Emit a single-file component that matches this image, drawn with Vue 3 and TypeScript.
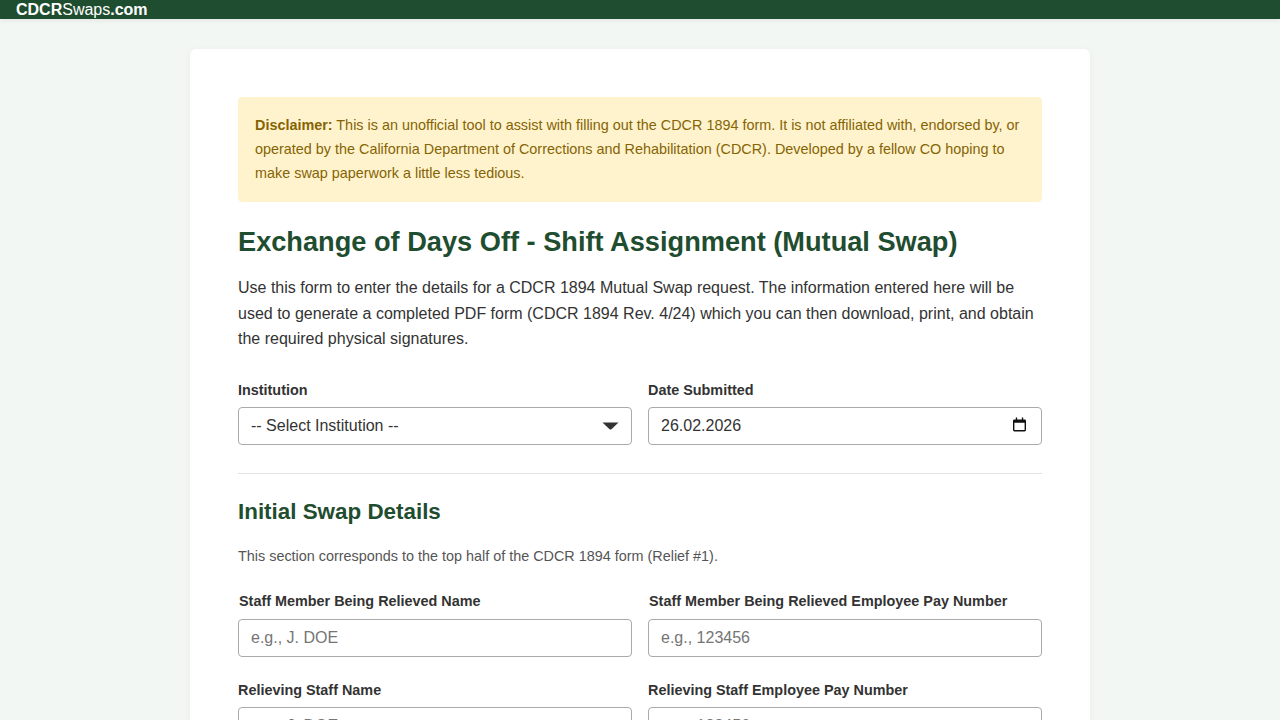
<script setup lang="ts">
import { ref } from 'vue'

interface Field {
  label: string
  placeholder: string
  shifted?: boolean
}

const dateSubmitted = ref('26.02.2026')

const relievedFields: Field[] = [
  { label: 'Staff Member Being Relieved Name', placeholder: 'e.g., J. DOE', shifted: true },
  { label: 'Staff Member Being Relieved Employee Pay Number', placeholder: 'e.g., 123456', shifted: true },
  { label: 'Relieving Staff Name', placeholder: 'e.g., J. DOE' },
  { label: 'Relieving Staff Employee Pay Number', placeholder: 'e.g., 123456' },
]
</script>

<template>
  <div class="page">
    <header class="topbar">
      <a class="brand" href="#"><strong>CDCR</strong>Swaps<strong>.com</strong></a>
    </header>

    <main class="card">
      <div class="notice">
        <strong>Disclaimer:</strong> This is an unofficial tool to assist with filling out the CDCR 1894 form. It is not affiliated with, endorsed by, or operated by the California Department of Corrections and Rehabilitation (CDCR). Developed by a fellow CO hoping to make swap paperwork a little less tedious.
      </div>

      <h1>Exchange of Days Off - Shift Assignment (Mutual Swap)</h1>
      <p class="intro">
        Use this form to enter the details for a CDCR 1894 Mutual Swap request. The information entered here will be used to generate a completed PDF form (CDCR 1894 Rev. 4/24) which you can then download, print, and obtain the required physical signatures.
      </p>

      <div class="grid">
        <div class="field">
          <label for="institution">Institution</label>
          <div class="control">
            <select id="institution">
              <option>-- Select Institution --</option>
            </select>
            <svg class="overlay-icon arrow" width="17" height="8" viewBox="0 0 18 8" preserveAspectRatio="none" aria-hidden="true">
              <path d="M0.5 0.5H17.5L10 7.2Q9 8 8 7.2Z" fill="#333" />
            </svg>
          </div>
        </div>
        <div class="field">
          <label for="date">Date Submitted</label>
          <div class="control">
            <input id="date" v-model="dateSubmitted" type="text" />
            <svg class="overlay-icon calendar" width="13" height="15" viewBox="0 0 14 15" aria-hidden="true">
              <path d="M3 0H4.5V2H9.5V0H11V2H12.5Q14 2 14 3.5V13.5Q14 15 12.5 15H1.5Q0 15 0 13.5V3.5Q0 2 1.5 2H3ZM1.5 5.5V13.5H12.5V5.5Z" fill="#111" fill-rule="evenodd" />
            </svg>
          </div>
        </div>
      </div>

      <hr />

      <h2>Initial Swap Details</h2>
      <p class="section-note">This section corresponds to the top half of the CDCR 1894 form (Relief #1).</p>

      <div class="grid people">
        <div v-for="field in relievedFields" :key="field.label" class="field">
          <label :class="{ shifted: field.shifted }">{{ field.label }}</label>
          <input type="text" :placeholder="field.placeholder" />
        </div>
      </div>
    </main>
  </div>
</template>

<style>
html,
body {
  margin: 0;
  height: 720px;
  overflow: hidden;
  background: #f3f7f4;
}
</style>

<style scoped>
* {
  box-sizing: border-box;
}

.page {
  font-family: "Liberation Sans", Arial, sans-serif;
  color: #333;
  background: #f3f7f4;
}

.topbar {
  height: 19px;
  padding-left: 16px;
  background: #1f4d2f;
  box-shadow: 0 2px 4px rgba(0, 0, 0, 0.06);
  line-height: 19px;
}

.brand {
  color: #fff;
  font-size: 16px;
  text-decoration: none;
  display: block;
}

.card {
  width: 900px;
  margin: 30px auto 0;
  padding: 48px;
  background: #fff;
  border-radius: 6px;
  box-shadow: 0 2px 8px rgba(0, 0, 0, 0.05);
}

.notice {
  padding: 15px 16px 16px;
  border: 1px solid #fff3cd;
  border-radius: 4px;
  background: #fff3cd;
  color: #856404;
  font-size: 14.4px;
  line-height: 24px;
}

h1 {
  margin: 22px 0 0;
  color: #1f4d2f;
  font-size: 27.2px;
  line-height: 36px;
  font-weight: 700;
}

.intro {
  margin: 15px 0 0;
  font-size: 16px;
  line-height: 25.6px;
}

.grid {
  display: grid;
  grid-template-columns: 1fr 1fr;
  gap: 16px;
  margin-top: 29px;
}

.people {
  margin-top: 26px;
  row-gap: 24px;
}

.field {
  min-width: 0;
}

label {
  display: block;
  margin-bottom: 8px;
  font-size: 14.4px;
  line-height: 18px;
  font-weight: 700;
}

.shifted {
  padding-left: 1px;
  margin-bottom: 9px;
}

.control {
  position: relative;
}

input,
select {
  display: block;
  width: 100%;
  height: 38px;
  padding: 0 12px;
  border: 1px solid #aaa;
  border-radius: 4px;
  background: #fff;
  color: #333;
  font: 16px "Liberation Sans", Arial, sans-serif;
  appearance: none;
  outline: none;
}

input::placeholder {
  color: #757575;
}

.overlay-icon {
  position: absolute;
  pointer-events: none;
}

.arrow {
  right: 13px;
  top: 15px;
}

.calendar {
  right: 16px;
  top: 10px;
}

hr {
  height: 1px;
  margin: 28px 0 0;
  border: 0;
  background: #e2e2e2;
}

h2 {
  margin: 24px 0 0;
  color: #1f4d2f;
  font-size: 22.4px;
  line-height: 28px;
  font-weight: 700;
}

.section-note {
  margin: 20px 0 0;
  color: #555;
  font-size: 14.4px;
  line-height: 20px;
}
</style>
